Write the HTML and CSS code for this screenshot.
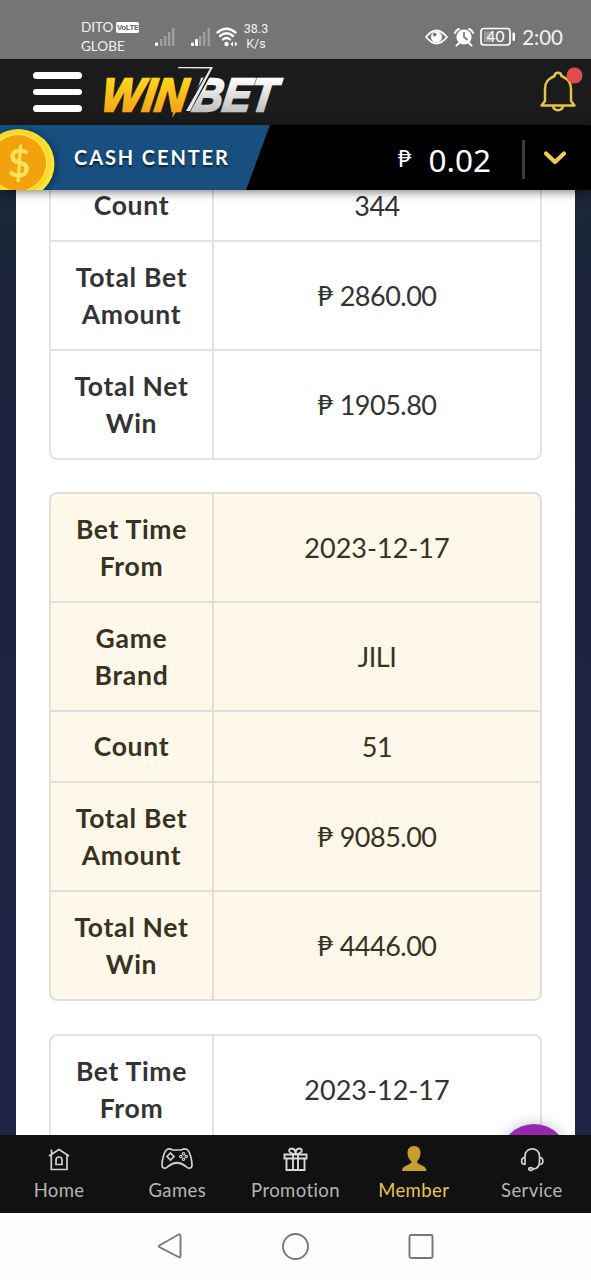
FILE: index.html
```
<!DOCTYPE html>
<html lang="en">
<head>
<meta charset="utf-8">
<title>WinBet</title>
<link rel="stylesheet" href="styles.css">
</head>
<body>
<div class="phone">
  <div class="status">
    <div class="carriers"><div class="carrier">DITO <span class="volte">VoLTE</span></div><div class="carrier">GLOBE</div></div>
    <svg class="signals" width="86" height="24" viewBox="0 0 86 24">
      <g fill="#a0a0a0"><rect x="5" y="15" width="2.4" height="7"/><rect x="9" y="12" width="2.4" height="10"/><rect x="13" y="8" width="2.4" height="14"/><rect x="17" y="4" width="2.4" height="18"/><rect x="44" y="12" width="2.4" height="10"/><rect x="48" y="8" width="2.4" height="14"/><rect x="52.500" y="4" width="2.400" height="18"/></g>
      <g fill="#fff"><rect x="0" y="18.500" width="3" height="3.500" rx="1"/><rect x="36" y="18.500" width="3" height="3.500" rx="1"/><rect x="40" y="15" width="3" height="7" rx="1"/><circle cx="71.500" cy="20" r="2.200"/><path d="M75.500 20l2.600-2.500v5zM82.500 20l-2.600-2.500v5z"/></g>
      <g fill="none" stroke="#fff" stroke-width="2.300" stroke-linecap="round"><path d="M62.500 8.500Q71.500 1 80.500 8.500"/><path d="M65 12Q71.500 6.500 78 12"/><path d="M68 15.500Q71.500 12.500 75 15.500"/></g>
    </svg>
    <div class="speed">38.3<br>K/s</div>
    <svg class="sysicons" width="92" height="22" viewBox="0 0 92 22">
      <path d="M1 11Q11.500-2 22 11Q11.500 24 1 11Z" fill="none" stroke="#fff" stroke-width="1.800"/>
      <circle cx="11.500" cy="11" r="5.500" fill="#fff"/><circle cx="9.700" cy="8.600" r="1.900" fill="#757575"/>
      <circle cx="39" cy="11" r="7.600" fill="#fff"/><path d="M30 7Q31 4 34 3M44 3Q47 4 48 7M34 17l-2.500 2.500M44 17l2.500 2.500" stroke="#fff" stroke-width="2" stroke-linecap="round" fill="none"/><path d="M39 6v5l3.500 3" fill="none" stroke="#757575" stroke-width="1.700"/>
      <rect x="56" y="2.500" width="29" height="16.500" rx="3" fill="none" stroke="#fff" stroke-width="1.700"/><rect x="59" y="5.500" width="9" height="10.500" fill="#999"/><rect x="87.500" y="6.500" width="2.500" height="8.500" rx="1" fill="#fff"/>
      <text x="70.500" y="16" class="battery-text">40</text>
    </svg>
    <div class="clock">2:00</div>
  </div>

  <header class="topbar">
    <div class="burger"><i></i><i></i><i></i></div>
    <svg class="logo" width="196" height="60" viewBox="-4 0 196 60">
      <defs>
        <linearGradient id="gold" x1="0" y1="0" x2="0" y2="1"><stop offset=".2" stop-color="#ffd51c"/><stop offset="1" stop-color="#f29a17"/></linearGradient>
        <linearGradient id="silver" x1="0" y1="0" x2="0" y2="1"><stop offset=".2" stop-color="#fff"/><stop offset="1" stop-color="#b0b0b2"/></linearGradient>
      </defs>
      <text class="logo-text" transform="translate(2 46.500) skewX(-8) scale(1 1.170)" textLength="85" lengthAdjust="spacingAndGlyphs" fill="url(#gold)" stroke="url(#gold)">WIN</text>
      <text class="logo-text" transform="translate(93 46.500) skewX(-8) scale(1 1.170)" textLength="84" lengthAdjust="spacingAndGlyphs" fill="url(#silver)" stroke="url(#silver)">BET</text>
      <path d="M82 42L74 54L77 40Z" fill="#f5a319"/>
      <path d="M114 4L89 48" fill="none" stroke="#1b1b1b" stroke-width="5"/>
      <path d="M80 3H115L92 47H88L112 4.500L80 4.200Z" fill="#e7e7e7"/>
    </svg>
    <svg class="bell" width="46" height="52" viewBox="0 0 46 52">
      <g fill="none" stroke="#e2c548" stroke-width="2.500" stroke-linejoin="round"><path d="M4.500 42.500L8 38V26C8 19 11 16 17.500 13C18 8.500 24 8.500 24.500 13C31 16 34 19 34 26V38L37.500 42.500Z"/><path d="M16 43C17 48.500 25 48.500 26 43"/></g>
      <circle cx="37.500" cy="12.500" r="8" fill="#e04b4e"/>
    </svg>
  </header>

  <div class="cashbar">
    <div class="cash-center">
      <svg class="coin" width="57" height="65" viewBox="0 0 57 65">
        <circle cx="20" cy="39" r="34.500" fill="#f6e737"/><circle cx="18" cy="37" r="33" fill="#fbd62e"/><circle cx="18" cy="38" r="29.500" fill="#ffec39"/><circle cx="18" cy="38" r="28" fill="#f2a20c"/>
        <text x="19" y="51.500" class="dollar">$</text>
      </svg>
      <span class="cash-label">CASH CENTER</span>
    </div>
    <div class="balance"><span class="peso">₱</span><span class="amount">0.02</span></div>
    <div class="split"></div>
    <svg class="chevron" width="24" height="18" viewBox="0 0 24 18"><path d="M3 4.500L12 13L21 4.500" fill="none" stroke="#f0cb55" stroke-width="4.200" stroke-linecap="round" stroke-linejoin="round"/></svg>
  </div>

  <main class="content">
    <div class="sheet">
      <section class="card card-cut">
        <div class="row single"><div class="key">Count</div><div class="val">344</div></div>
        <div class="row"><div class="key">Total Bet<br>Amount</div><div class="val"><span class="p">₱</span> 2860.00</div></div>
        <div class="row"><div class="key">Total Net<br>Win</div><div class="val"><span class="p">₱</span> 1905.80</div></div>
      </section>
      <section class="card cream">
        <div class="row"><div class="key">Bet Time<br>From</div><div class="val date">2023-12-17</div></div>
        <div class="row"><div class="key">Game<br>Brand</div><div class="val">JILI</div></div>
        <div class="row single"><div class="key">Count</div><div class="val">51</div></div>
        <div class="row"><div class="key">Total Bet<br>Amount</div><div class="val"><span class="p">₱</span> 9085.00</div></div>
        <div class="row"><div class="key">Total Net<br>Win</div><div class="val"><span class="p">₱</span> 4446.00</div></div>
      </section>
      <section class="card">
        <div class="row"><div class="key">Bet Time<br>From</div><div class="val date">2023-12-17</div></div>
      </section>
    </div>
    <div class="fab"></div>
  </main>

  <nav class="tabs">
    <div class="tab"><svg width="32" height="28" viewBox="0 0 32 28"><g fill="none" stroke="#d0d0d0" stroke-width="1.700" stroke-linejoin="round"><path d="M6 11L16 4.500L26 11M8.300 10V24.500H24V10M8.500 8.500V4.500"/><path d="M13 19.500V15Q13 12 16 12T19 15V19.500Z"/></g></svg><span>Home</span></div>
    <div class="tab"><svg width="36" height="28" viewBox="0 0 36 28"><g fill="none" stroke="#d0d0d0" stroke-width="1.700"><path d="M8 4.500C10 3.500 12 4 13.500 5H22.500C24 4 26 3.500 28 4.500C31 6 33 16 33 20C33 24 29 24 27 21.500C21 16.500 15 16.500 9 21.500C7 24 3 24 3 20C3 16 5 6 8 4.500Z"/><path d="M11.500 8L15 11.500L11.500 15L8 11.500Z"/></g><g fill="none" stroke="#d0d0d0" stroke-width="1.200"><circle cx="24.500" cy="8.800" r="1.200"/><circle cx="24.500" cy="14.200" r="1.200"/><circle cx="21.800" cy="11.500" r="1.200"/><circle cx="27.200" cy="11.500" r="1.200"/></g></svg><span>Games</span></div>
    <div class="tab"><svg width="32" height="28" viewBox="0 0 32 28"><g fill="none" stroke="#d8d8d8" stroke-width="1.900"><path d="M5.500 9.500H27.500V13.500H5.500ZM7.500 13.500V25H25.500V13.500M14 9.500V25M19 9.500V25"/><path d="M16.500 9C9.500 9 8.500 4 12.500 3.500C15.500 3.500 16.500 6 16.500 9C16.500 6 17.500 3.500 20.500 3.500C24.500 4 23.500 9 16.500 9"/></g></svg><span>Promotion</span></div>
    <div class="tab active"><svg width="32" height="28" viewBox="0 0 32 28"><path d="M16 1C20.500 1 22.500 4 22.500 8C22.500 12 20.500 15 19 16.500C19 20.500 28.500 19.500 28.500 26H4C4 19.500 13.500 20.500 13.500 16.500C11.500 15 9.500 12 9.500 8C9.500 4 11.500 1 16 1Z" fill="#c79e31"/></svg><span>Member</span></div>
    <div class="tab"><svg width="32" height="28" viewBox="0 0 32 28"><g fill="none" stroke="#d0d0d0" stroke-width="1.700"><path d="M9 20V11C9 1.500 23.500 1.500 23.500 11V16C23.500 21 21.500 24 17 24"/><path d="M9 12.500C4.500 12.500 4.500 19.500 9 19.500M23.500 12.500C28 12.500 28 19.500 23.500 19.500"/><ellipse cx="14.800" cy="24" rx="2" ry="1.300"/></g></svg><span>Service</span></div>
  </nav>

  <div class="sysnav">
    <svg width="30" height="30" viewBox="0 0 30 30"><path d="M4.300 14.500L23.500 3.500Q25.500 2.800 25.500 5V24.500Q25.500 27 23.500 26L4.300 16Q3.300 15.200 4.300 14.500Z"/></svg>
    <svg width="30" height="30" viewBox="0 0 30 30"><circle cx="14.500" cy="15.500" r="12.500"/></svg>
    <svg width="30" height="30" viewBox="0 0 30 30"><rect x="3.500" y="4" width="23" height="23" rx="1.500"/></svg>
  </div>
</div>
</body>
</html>
```
FILE: styles.css
```
* { box-sizing: border-box; }
body { margin: 0; font-family: Lato, "Noto Sans", sans-serif; color: #333; }
.phone { width: 591px; height: 1280px; display: flex; flex-direction: column; overflow: hidden; background: #fdfdfd; }

.status { height: 59px; flex: none; background: #757575; color: #f2f2f2; display: flex; align-items: flex-start; padding: 18px 28px 0 81px; }
.carriers { width: 74px; font-size: 13.500px; line-height: 18.500px; }
.carrier { display: flex; align-items: center; gap: 3px; white-space: nowrap; }
.volte { flex: none; background: #fff; color: #666; border-radius: 2px; font: bold 8px/11px "Liberation Sans", sans-serif; width: 23px; height: 11px; text-align: center; letter-spacing: -.500px; }
.signals { flex: none; margin-top: 6px; }
.speed { width: 30px; margin-top: 3px; font: 12.500px/15px Roboto, sans-serif; text-align: center; }
.sysicons { margin: 8px 5px 0 auto; }
.battery-text { font: 15.500px Lato, sans-serif; fill: #fff; text-anchor: middle; }
.clock { margin-top: 6px; font-size: 20.500px; line-height: 26px; }

.topbar { height: 66px; flex: none; background: #1b1b1b; display: flex; align-items: flex-start; padding: 0 8px 0 33px; }
.burger { width: 49px; margin-top: 13px; display: flex; flex-direction: column; gap: 10px; }
.burger i { height: 6.500px; border-radius: 4px; background: #fff; }
.logo { margin: 5px 0 0 12px; }
.logo-text { font: italic bold 40px "Liberation Sans", sans-serif; stroke-width: 2px; }
.bell { margin: 4px 0 0 auto; }

.cashbar { height: 65px; flex: none; background: #000; display: flex; align-items: center; padding-right: 24px; position: relative; z-index: 1; box-shadow: 0 2px 9px rgba(0, 0, 0, .5); }
.cash-center { width: 270px; height: 65px; display: flex; background: #174f80; clip-path: polygon(0 0, 100% 0, 246px 100%, 0 100%); }
.coin { flex: none; filter: drop-shadow(2px 1px 3px rgba(0, 0, 0, .4)); }
.dollar { font: 39px Lato, sans-serif; fill: #ffe25a; stroke: #ffe25a; text-anchor: middle; }
.cash-label { margin-left: 17px; line-height: 65px; font-size: 20px; font-weight: 700; letter-spacing: 1.900px; color: #fff; text-shadow: 0 2px 2px rgba(0, 0, 0, .6); white-space: nowrap; }
.balance { margin-left: auto; color: #fff; display: flex; align-items: center; gap: 17px; }
.peso { font-size: 23.500px; line-height: 26px; }
.amount { padding-top: 5px; font-family: "Noto Sans", sans-serif; font-size: 31.500px; line-height: 40px; }
.split { width: 3px; height: 39px; margin: 4px 0 0 31px; background: #3d3d3d; }
.chevron { margin: 0 0 0 18px; }

.content { height: 945px; flex: none; position: relative; overflow: hidden; padding: 0 16px; background: linear-gradient(#1b2637, #1c2240 30%, #202447); }
.sheet { height: 945px; background: #fff; padding: 0 33px; display: flex; flex-direction: column; gap: 33px; }
.card { flex: none; width: 493px; border: 2px solid #e2e2e2; border-radius: 8px; overflow: hidden; }
.card-cut { margin: -20px 0 -1px; border-top: 0; border-radius: 0 0 8px 8px; }
.cream { background: #fef8ea; color: #38321f; border-color: #dfdfda; }
.row { height: 109px; display: flex; border-top: 2px solid #e2e2e2; }
.single { height: 71px; }
.row:first-child { height: 107px; border-top: 0; }
.row.single:first-child { height: 70px; padding-top: 1px; }
.cream .row, .cream .key { border-color: #dfdfda; }
.key { width: 163px; display: flex; align-items: center; justify-content: center; padding-top: 1px; border-right: 2px solid #e2e2e2; text-align: center; font-size: 26.500px; line-height: 37.400px; letter-spacing: .700px; font-weight: 700; }
.val { flex: 1; display: flex; align-items: center; justify-content: center; gap: 7px; font-size: 27px; line-height: 37px; letter-spacing: -.500px; }
.date { letter-spacing: 0; }
.fab { position: absolute; left: 500px; top: 934px; width: 68px; height: 68px; border-radius: 50%; background: #9529ad; box-shadow: 0 0 14px rgba(40, 50, 90, .3); }

.tabs { height: 78px; flex: none; background: #111; color: #b5b5b5; display: grid; grid-template-columns: repeat(5, 1fr); }
.tab { display: flex; flex-direction: column; align-items: center; padding-top: 10px; font-size: 18.500px; line-height: 24px; letter-spacing: .400px; }
.tab svg { margin-bottom: 5px; }
.active { color: #e8c547; }

.sysnav { height: 67px; display: flex; justify-content: center; gap: 95.500px; padding-top: 18px; background: #fdfdfd; }
.sysnav svg { fill: none; stroke: #777; stroke-width: 1.900px; }
```
